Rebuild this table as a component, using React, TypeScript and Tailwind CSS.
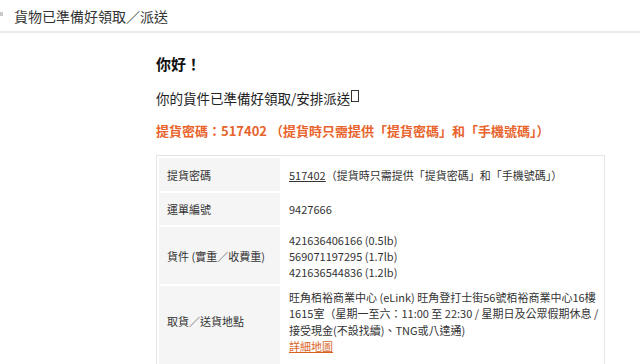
import React from "react";

const font = { fontFamily: '"Noto Sans CJK TC", "Noto Sans", sans-serif' };

// one row of the pickup details table
const Row = ({ label, h, children }: { label: string; h: string; children: React.ReactNode }) => (
  <div className={`flex ${h}`}>
    <div className="w-[121px] shrink-0 bg-[#f5f5f5] flex items-center pl-[8px] text-[#333]">{label}</div>
    <div className="flex-1 flex items-center pl-[9px] text-[#333]">
      <div>{children}</div>
    </div>
  </div>
);

export default function App() {
  return (
    <div className="w-[640px] h-[364px] overflow-hidden bg-white" style={font}>
      {/* top bar */}
      <div className="h-[33px] flex items-center border-b-2 border-[#ebebeb] relative">
        <span className="absolute left-0 top-[12px] w-[3px] h-[4px] bg-[#c8c8c8]" />
        <span className="pl-[14px] text-[14px] leading-[20px] text-[#333]">貨物已準備好領取／派送</span>
      </div>

      <div className="pl-[156px] pt-[21px]">
        <h1 className="text-[15px] leading-[20px] font-bold text-[#111]">你好！</h1>
        <p className="mt-[14px] text-[13.5px] leading-[20px] text-[#222] flex items-center">
          你的貨件已準備好領取/安排派送
          <span className="inline-block w-[8px] h-[12px] border border-[#333] ml-[1px] mb-[4px]" />
        </p>
        <p className="mt-[13px] text-[13px] leading-[20px] font-bold text-[#e8642c]">
          提貨密碼：517402 （提貨時只需提供「提貨密碼」和「手機號碼」）
        </p>

        <div className="mt-[14px] w-[449px] border border-[#e6e6e6] p-[2px] flex flex-col gap-[2px] text-[11px] leading-[16px]">
          <Row label="提貨密碼" h="h-[33px]">
            <span className="underline">517402</span>（提貨時只需提供「提貨密碼」和「手機號碼」）
          </Row>
          <Row label="運單編號" h="h-[32px]">
            9427666
          </Row>
          <Row label="貨件 (實重／收費重)" h="h-[57px]">
            421636406166 (0.5lb)
            <br />
            569071197295 (1.7lb)
            <br />
            421636544836 (1.2lb)
          </Row>
          <div className="flex h-[78px]">
            <div className="w-[121px] shrink-0 bg-[#f5f5f5] pl-[8px] pt-[27px] text-[#333]">取貨／送貨地點</div>
            <div className="flex-1 pl-[9px] pt-[3px] leading-[16.3px] text-[#333]">
              旺角栢裕商業中心 (eLink) 旺角登打士街56號栢裕商業中心16樓
              <br />
              1615室（星期一至六：11:00 至 22:30 / 星期日及公眾假期休息 /
              <br />
              接受現金(不設找續)、TNG或八達通)
              <br />
              <a className="underline text-[#d9641f]">詳細地圖</a>
            </div>
          </div>
        </div>
      </div>
    </div>
  );
}
